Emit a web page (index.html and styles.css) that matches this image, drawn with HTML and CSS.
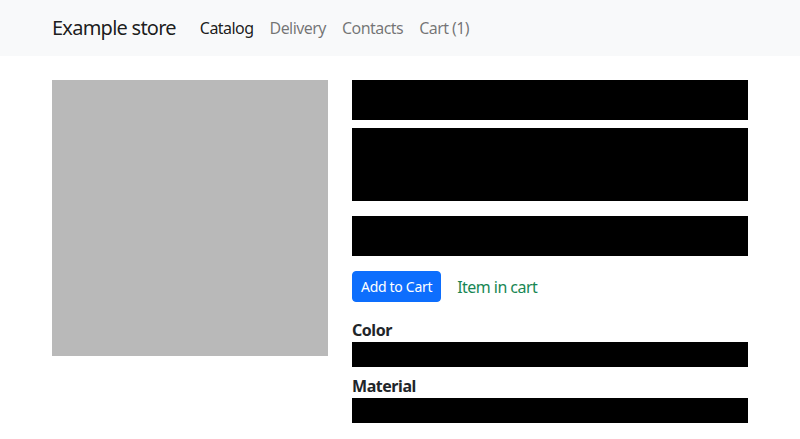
FILE: index.html
```html
<!DOCTYPE html>
<html lang="en">
<head>
<meta charset="utf-8">
<title>Example store</title>
<link rel="stylesheet" href="styles.css">
</head>
<body>
<nav class="navbar">
  <div class="container nav-inner">
    <a class="brand" href="#">Example store</a>
    <ul class="nav-links">
      <li><a class="nav-link active" href="#">Catalog</a></li>
      <li><a class="nav-link" href="#">Delivery</a></li>
      <li><a class="nav-link" href="#">Contacts</a></li>
      <li><a class="nav-link" href="#">Cart (1)</a></li>
    </ul>
  </div>
</nav>
<main class="container product">
  <div class="product-image"></div>
  <div class="product-info">
    <div class="redact redact-title"></div>
    <div class="redact redact-desc"></div>
    <div class="redact redact-price"></div>
    <div class="cart-row">
      <button class="btn-cart" type="button">Add to Cart</button>
      <span class="in-cart">Item in cart</span>
    </div>
    <div class="attr attr-first">
      <div class="attr-label">Color</div>
      <div class="redact redact-attr"></div>
    </div>
    <div class="attr">
      <div class="attr-label">Material</div>
      <div class="redact redact-attr"></div>
    </div>
  </div>
</main>
</body>
</html>
```

FILE: styles.css
```css
* { box-sizing: border-box; }
html, body { margin: 0; padding: 0; }
body {
  font-family: "Noto Sans", "Open Sans", sans-serif;
  font-size: 16px;
  line-height: 1.5;
  letter-spacing: -0.45px;
  color: #212529;
  background: #fff;
}
.container {
  max-width: 720px;
  margin: 0 auto;
  padding: 0 12px;
}
.navbar {
  background: #f8f9fa;
  padding: 8px 0;
}
.nav-inner {
  display: flex;
  align-items: center;
}
.brand {
  font-size: 20px;
  line-height: 30px;
  padding: 5px 0;
  margin-right: 16px;
  letter-spacing: -0.75px;
  color: rgba(0,0,0,0.9);
  text-decoration: none;
}
.nav-links {
  display: flex;
  list-style: none;
  margin: 0;
  padding: 0;
}
.nav-link {
  display: block;
  padding: 8px;
  line-height: 24px;
  letter-spacing: -0.55px;
  color: rgba(0,0,0,0.55);
  text-decoration: none;
}
.nav-link.active { color: rgba(0,0,0,0.9); }
.product {
  display: flex;
  gap: 24px;
  margin-top: 24px;
  align-items: flex-start;
}
.product-image {
  width: 276px;
  height: 276px;
  flex: 0 0 276px;
  background: #b9b9b9;
}
.product-info {
  flex: 1;
  display: flex;
  flex-direction: column;
}
.redact { background: #000; }
.redact-title { height: 40px; margin-bottom: 8px; }
.redact-desc { height: 73px; margin-bottom: 15px; }
.redact-price { height: 40px; margin-bottom: 15px; }
.cart-row {
  display: flex;
  align-items: center;
  gap: 16px;
  margin-bottom: 16px;
}
.btn-cart {
  font-family: inherit;
  font-size: 14px;
  line-height: 21px;
  letter-spacing: -0.3px;
  padding: 4px 8px;
  border: 1px solid #0d6efd;
  border-radius: 4px;
  background: #0d6efd;
  color: #fff;
  cursor: pointer;
}
.in-cart { color: #198754; letter-spacing: -0.55px; }
.attr-label {
  font-weight: 700;
  line-height: 24px;
}
.attr-first { margin-bottom: 7px; }
.redact-attr { height: 25px; }
```
